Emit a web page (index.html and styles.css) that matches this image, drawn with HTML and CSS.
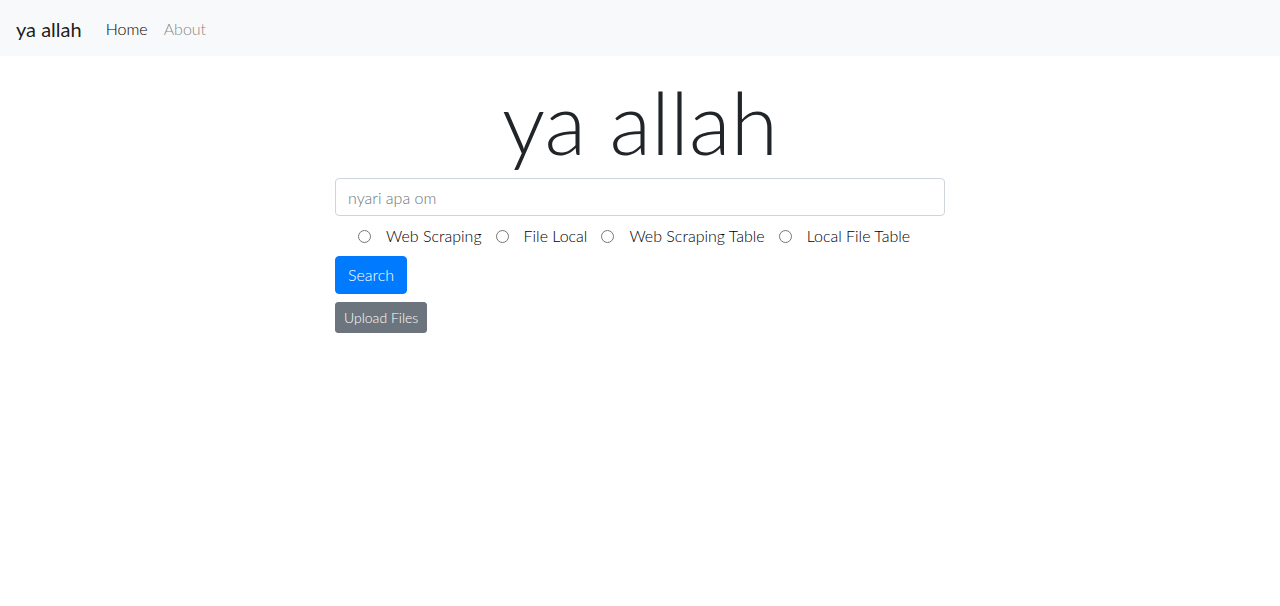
FILE: index.html
```html
<!DOCTYPE html>
<html>
<head>
<meta charset="utf-8">
<link rel="stylesheet" href="styles.css">
</head>
<body>
<nav class="navbar">
  <a class="brand" href="#">ya allah</a>
  <a class="nav-link active" href="#">Home</a>
  <a class="nav-link" href="#">About</a>
</nav>
<main class="main">
  <h1 class="title">ya allah</h1>
  <form class="search-form">
    <input class="search-input" type="text" placeholder="nyari apa om">
    <div class="options">
      <label class="option"><input type="radio" name="mode"><span>Web Scraping</span></label>
      <label class="option"><input type="radio" name="mode"><span>File Local</span></label>
      <label class="option"><input type="radio" name="mode"><span>Web Scraping Table</span></label>
      <label class="option"><input type="radio" name="mode"><span>Local File Table</span></label>
    </div>
    <div class="actions">
      <button type="button" class="btn btn-primary">Search</button>
      <button type="button" class="btn btn-secondary btn-sm">Upload Files</button>
    </div>
  </form>
</main>
</body>
</html>
```
FILE: styles.css
```css
* { box-sizing: border-box; }
body {
  margin: 0;
  font-family: Lato, "Noto Sans", sans-serif;
  font-weight: 400;
  font-size: 16px;
  line-height: 1.5;
  color: #212529;
  background: #fff;
}
.navbar {
  height: 56px;
  background: #f8f9fa;
  display: flex;
  align-items: center;
  padding: 2px 16px 0;
}
.brand {
  font-size: 20px;
  color: rgba(0,0,0,.9);
  text-decoration: none;
  margin-right: 16px;
}
.nav-link {
  padding: 8px;
  color: rgba(0,0,0,.5);
  text-decoration: none;
  font-weight: 300;
}
.nav-link.active { color: #000; }
.main {
  display: flex;
  flex-direction: column;
  align-items: center;
}
.title {
  margin: 14px 0 0;
  font-size: 86px;
  font-weight: 300;
  line-height: 1.2;
  color: #212529;
}
.search-form {
  width: 610px;
  margin-top: 5px;
}
.search-input {
  display: block;
  width: 100%;
  height: 38px;
  padding: 6px 12px;
  font-family: inherit;
  font-size: 16px;
  font-weight: 300;
  border: 1px solid #ced4da;
  border-radius: 4px;
  color: #495057;
}
.search-input::placeholder { color: #6c757d; }
.options {
  display: flex;
  padding-left: 23px;
  margin-top: 8px;
  height: 24px;
  align-items: center;
}
.option {
  display: flex;
  align-items: center;
  margin-right: 14px;
  font-weight: 300;
  color: #000;
}
.option input {
  margin: 0 15px 0 0;
  width: 13px;
  height: 13px;
}
.actions {
  display: flex;
  flex-direction: column;
  align-items: flex-start;
  gap: 8px;
  margin-top: 8px;
}
.btn {
  font-family: inherit;
  font-weight: 300;
  font-size: 16px;
  line-height: 1.5;
  padding: 6px 12px;
  border: 1px solid transparent;
  border-radius: 4px;
  color: #fff;
}
.btn-primary { background: #007bff; border-color: #007bff; }
.btn-secondary { background: #6c757d; border-color: #6c757d; }
.btn-sm { font-size: 14px; padding: 4px 8px; border-radius: 3px; }
```
